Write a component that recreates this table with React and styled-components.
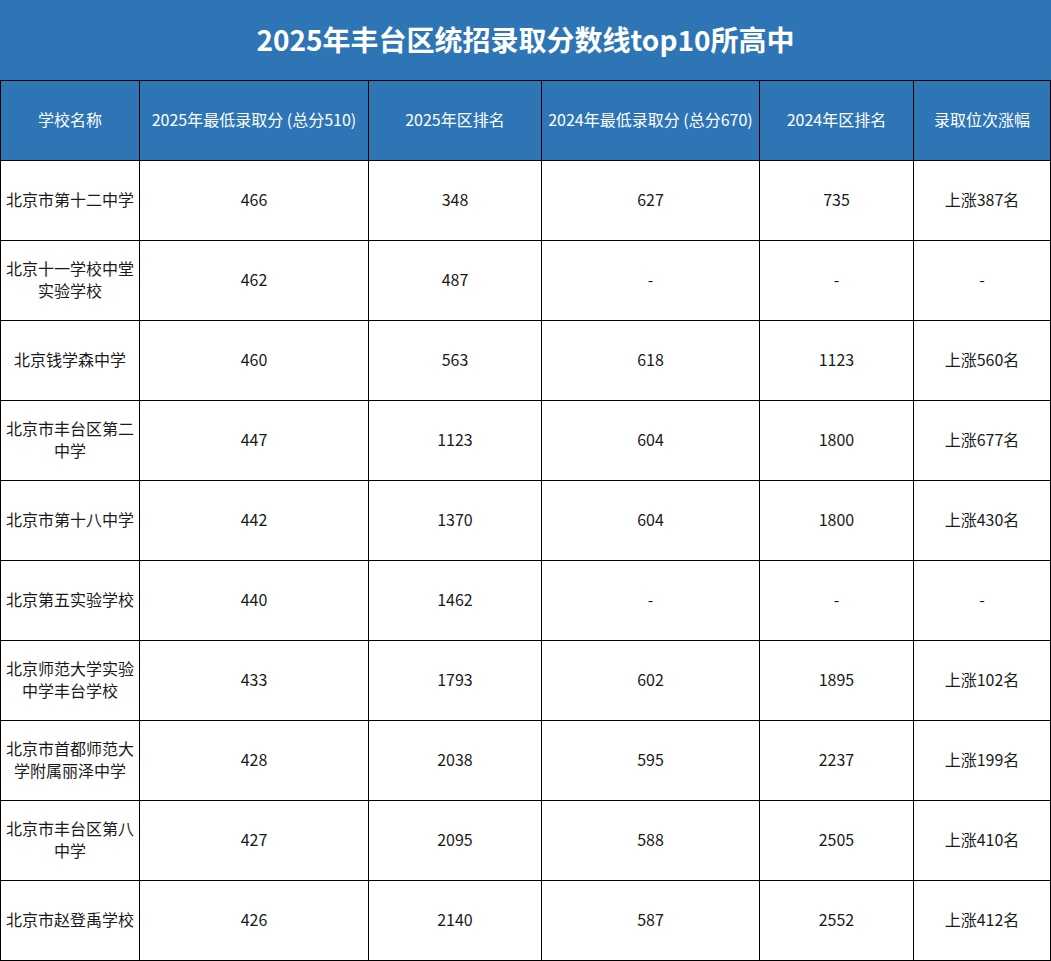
import React from "react";
import styled, { createGlobalStyle } from "styled-components";

const Global = createGlobalStyle`
  html, body {
    margin: 0;
    padding: 0;
    background: #fff;
  }
  body {
    font-family: "Microsoft YaHei", "Noto Sans CJK SC", "Noto Sans", sans-serif;
  }
`;

const BLUE = "#2e75b6";

const Page = styled.div`
  width: 1051px;
`;

const Title = styled.div`
  height: 80px;
  padding-bottom: 2px;
  box-sizing: border-box;
  background: ${BLUE};
  color: #fff;
  font-size: 28px;
  font-weight: 700;
  display: flex;
  align-items: center;
  justify-content: center;
`;

const Grid = styled.div`
  display: grid;
  grid-template-columns: 138px 228px 172px 217px 153px 136px;
  grid-auto-rows: 79px;
  gap: 1px;
  padding: 1px;
  background: #000;
`;

const Cell = styled.div`
  display: flex;
  align-items: center;
  justify-content: center;
  text-align: center;
  padding: 0 5px 3px;
  font-size: 16px;
  line-height: 22px;
  background: ${({ $head }) => ($head ? BLUE : "#fff")};
  color: ${({ $head }) => ($head ? "#fff" : "#1a1a1a")};
  white-space: ${({ $head }) => ($head ? "nowrap" : "normal")};
`;

const headers = [
  "学校名称",
  "2025年最低录取分 (总分510)",
  "2025年区排名",
  "2024年最低录取分 (总分670)",
  "2024年区排名",
  "录取位次涨幅",
];

const rows = [
  ["北京市第十二中学", "466", "348", "627", "735", "上涨387名"],
  ["北京十一学校中堂实验学校", "462", "487", "-", "-", "-"],
  ["北京钱学森中学", "460", "563", "618", "1123", "上涨560名"],
  ["北京市丰台区第二中学", "447", "1123", "604", "1800", "上涨677名"],
  ["北京市第十八中学", "442", "1370", "604", "1800", "上涨430名"],
  ["北京第五实验学校", "440", "1462", "-", "-", "-"],
  ["北京师范大学实验中学丰台学校", "433", "1793", "602", "1895", "上涨102名"],
  ["北京市首都师范大学附属丽泽中学", "428", "2038", "595", "2237", "上涨199名"],
  ["北京市丰台区第八中学", "427", "2095", "588", "2505", "上涨410名"],
  ["北京市赵登禹学校", "426", "2140", "587", "2552", "上涨412名"],
];

export default function App() {
  return (
    <Page>
      <Global />
      <Title>2025年丰台区统招录取分数线top10所高中</Title>
      <Grid>
        {headers.map((h) => (
          <Cell key={h} $head>
            {h}
          </Cell>
        ))}
        {rows.map((r, i) =>
          r.map((v, j) => <Cell key={i + "-" + j}>{v}</Cell>)
        )}
      </Grid>
    </Page>
  );
}
